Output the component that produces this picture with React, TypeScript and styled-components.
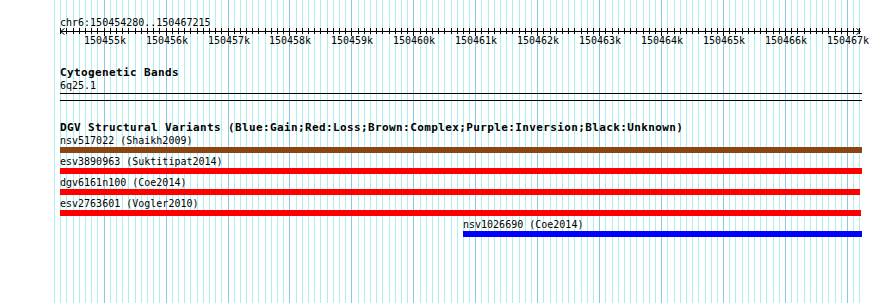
import React from 'react';
import styled, { createGlobalStyle } from 'styled-components';

const VIEW_START = 150454280;
const VIEW_END = 150467215;
const ORIGIN_X = 59.5;
const PX_PER_BP = 0.06195;
const TRACK_LEFT = 60;
const TRACK_RIGHT = 862;
const PAGE_W = 890;
const PAGE_H = 303;

const toX = (bp: number) => ORIGIN_X + (bp - VIEW_START) * PX_PER_BP;
const pixel = (bp: number) => Math.floor(toX(bp)) + 0.5;

type Variant = {
  name: string;
  study: string;
  start: number;
  end: number;
  color: string;
};

const variants: Variant[] = [
  { name: 'nsv517022', study: 'Shaikh2009', start: 150449000, end: 150467240, color: '#8b4513' },
  { name: 'esv3890963', study: 'Suktitipat2014', start: 150451000, end: 150467240, color: '#ff0000' },
  { name: 'dgv6161n100', study: 'Coe2014', start: 150452000, end: 150467203, color: '#ff0000' },
  { name: 'esv2763601', study: 'Vogler2010', start: 150450000, end: 150467218, color: '#ff0000' },
  { name: 'nsv1026690', study: 'Coe2014', start: 150460793, end: 150467240, color: '#0000ff' },
];

// 100bp grid, darker line every kb
const gridStops: number[] = [];
for (let bp = 150454200; bp <= 150467200; bp += 100) gridStops.push(bp);

const majorStops = gridStops.filter((bp) => bp % 1000 === 0);
const tickStops = gridStops.filter((bp) => bp >= VIEW_START && bp <= VIEW_END);

const GlobalStyle = createGlobalStyle`
  html, body {
    margin: 0;
    padding: 0;
    background: #ffffff;
  }
`;

const App: React.FC = () => {
  return (
    <>
      <GlobalStyle />
      <Page>
        <GridLayer width={PAGE_W} height={PAGE_H} shapeRendering="crispEdges">
          {gridStops.map((bp) => (
            <line
              key={bp}
              x1={pixel(bp)}
              x2={pixel(bp)}
              y1={0}
              y2={PAGE_H}
              stroke={bp % 1000 === 0 ? '#8ac8ea' : '#aeeeee'}
              strokeWidth={1}
            />
          ))}
        </GridLayer>

        <Content>
          <ScaleLabel>chr6:150454280..150467215</ScaleLabel>

          <Ruler width={PAGE_W} height={18}>
            <g shapeRendering="crispEdges" stroke="#000">
              <line x1={60} x2={860} y1={3.5} y2={3.5} />
              {tickStops.map((bp) => (
                <line
                  key={bp}
                  x1={pixel(bp)}
                  x2={pixel(bp)}
                  y1={0}
                  y2={bp % 1000 === 0 ? 8 : 6}
                />
              ))}
            </g>
            <polyline points="64.5,0.5 60.5,3.5 64.5,6.5" fill="none" stroke="#000" />
            <polyline points="856.5,0.5 860.5,3.5 856.5,6.5" fill="none" stroke="#000" />
            {majorStops.map((bp) => (
              <TickLabel key={bp} x={pixel(bp) + 0.5} y={16} textAnchor="middle">
                {bp / 1000}k
              </TickLabel>
            ))}
          </Ruler>

          <TrackTitle $gap={21}>Cytogenetic Bands</TrackTitle>
          <TrackText>6q25.1</TrackText>
          <Divider $gap={1} />
          <Divider $gap={6} />

          <TrackTitle $gap={21}>
            DGV Structural Variants (Blue:Gain;Red:Loss;Brown:Complex;Purple:Inversion;Black:Unknown)
          </TrackTitle>

          <FeatureList>
            {variants.map((v) => {
              const left = Math.max(TRACK_LEFT, Math.round(toX(v.start)));
              const right = Math.min(TRACK_RIGHT, Math.round(toX(v.end)));
              return (
                <Feature key={v.name} style={{ marginLeft: left }}>
                  <FeatureLabel>
                    {v.name} ({v.study})
                  </FeatureLabel>
                  <FeatureBar $color={v.color} style={{ width: right - left }} />
                </Feature>
              );
            })}
          </FeatureList>
        </Content>
      </Page>
    </>
  );
};

export default App;

const Page = styled.div`
  position: relative;
  width: ${PAGE_W}px;
  height: ${PAGE_H}px;
  overflow: hidden;
  background: #ffffff;
`;

const GridLayer = styled.svg`
  position: absolute;
  top: 0;
  left: 0;
  display: block;
`;

const Content = styled.div`
  position: relative;
  display: flex;
  flex-direction: column;
  padding-top: 17px;
  font-family: 'DejaVu Sans Mono', 'Liberation Mono', monospace;
  color: #000;
`;

const ScaleLabel = styled.div`
  height: 11px;
  padding-left: ${TRACK_LEFT}px;
  font-size: 10px;
  line-height: 11px;
  white-space: nowrap;
`;

const Ruler = styled.svg`
  display: block;
  overflow: visible;
`;

const TickLabel = styled.text`
  font-family: 'DejaVu Sans Mono', 'Liberation Mono', monospace;
  font-size: 10px;
  fill: #000;
`;

const TrackTitle = styled.div<{ $gap: number }>`
  height: 12px;
  margin-top: ${(p) => p.$gap}px;
  padding-left: ${TRACK_LEFT}px;
  font-size: 11px;
  font-weight: bold;
  line-height: 12px;
  letter-spacing: 0.38px;
  white-space: nowrap;
`;

const TrackText = styled.div`
  height: 12px;
  margin-top: 1px;
  padding-left: ${TRACK_LEFT}px;
  font-size: 10px;
  line-height: 12px;
  white-space: nowrap;
`;

const Divider = styled.div<{ $gap: number }>`
  height: 1px;
  width: ${TRACK_RIGHT - TRACK_LEFT}px;
  margin-top: ${(p) => p.$gap}px;
  margin-left: ${TRACK_LEFT}px;
  background: #000;
`;

const FeatureList = styled.div`
  display: flex;
  flex-direction: column;
  gap: 2px;
`;

const Feature = styled.div`
  display: flex;
  flex-direction: column;
`;

const FeatureLabel = styled.div`
  height: 13px;
  font-size: 10px;
  line-height: 13px;
  white-space: nowrap;
`;

const FeatureBar = styled.div<{ $color: string }>`
  height: 6px;
  background: ${(p) => p.$color};
`;
